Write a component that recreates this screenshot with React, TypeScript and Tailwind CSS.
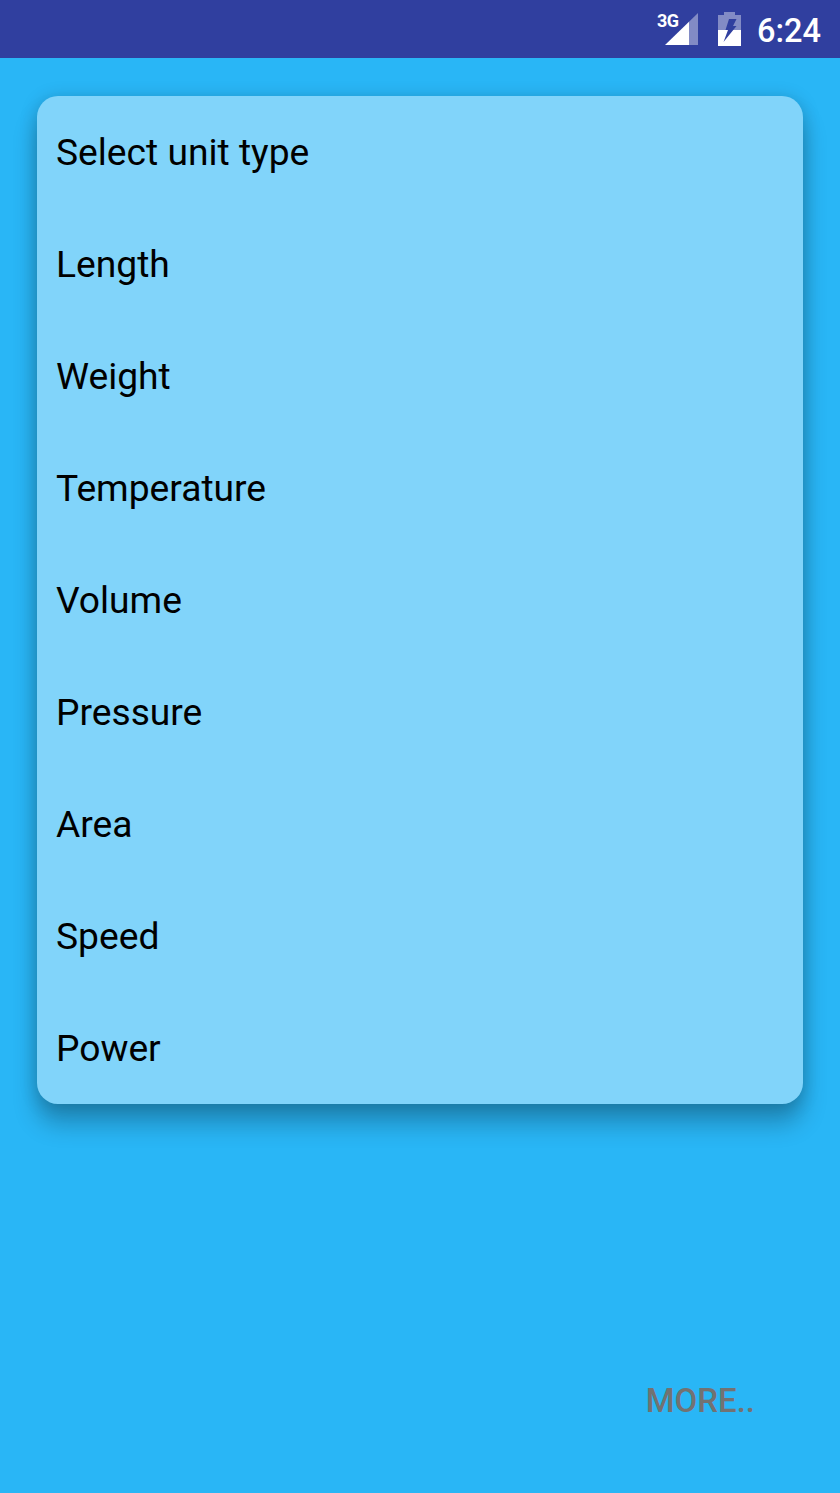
const units = [
  "Select unit type",
  "Length",
  "Weight",
  "Temperature",
  "Volume",
  "Pressure",
  "Area",
  "Speed",
  "Power",
];

const StatusBar = () => {
  return (
    <div className="flex h-[58px] items-center justify-end bg-[#303f9f] text-white">
      <svg width="42" height="36" viewBox="0 0 42 36">
        <path d="M41 2V34H32V10.7Z" fill="#fff" fillOpacity="0.4" />
        <path d="M32 10.7V34H8Z" fill="#fff" />
        <text x="0" y="16" fontFamily="Roboto, sans-serif" fontSize="18" fontWeight="700" fill="#fff" textLength="22">
          3G
        </text>
      </svg>
      <svg width="23" height="34" viewBox="0 0 23 34" className="ml-[19px]">
        <path d="M6 0H17V3H23V18H0V3H6Z" fill="#fff" fillOpacity="0.4" />
        <path d="M0 18H23V34H0Z" fill="#fff" />
        <path d="M11 7H18.5L15 14H18.5L5.5 30L10 18H7.5Z" fill="#303f9f" />
      </svg>
      <span className="ml-[16px] mr-[19px] mt-[4px] font-['Roboto',sans-serif] text-[32.5px] font-medium leading-none">6:24</span>
    </div>
  );
};

export default function App() {
  return (
    <div className="flex h-[1493px] w-[840px] flex-col overflow-hidden bg-[#29b6f6]">
      <StatusBar />
      <main className="flex flex-1 flex-col px-[37px] pt-[38px]">
        <ul className="rounded-[21px] bg-[#81d4fa] shadow-[0_20px_24px_rgba(0,0,0,0.24),0_2px_18px_rgba(0,0,0,0.18)]">
          {units.map((unit) => (
            <li
              key={unit}
              className="flex h-[112px] items-center px-[19px] pt-[2px] font-['Roboto',sans-serif] text-[37.2px] leading-none text-black"
            >
              {unit}
            </li>
          ))}
        </ul>
        <div className="mt-[280px] flex justify-end pr-[48px]">
          <span className="font-['Roboto',sans-serif] text-[33px] font-medium leading-none text-[#727272]">MORE..</span>
        </div>
      </main>
    </div>
  );
}
